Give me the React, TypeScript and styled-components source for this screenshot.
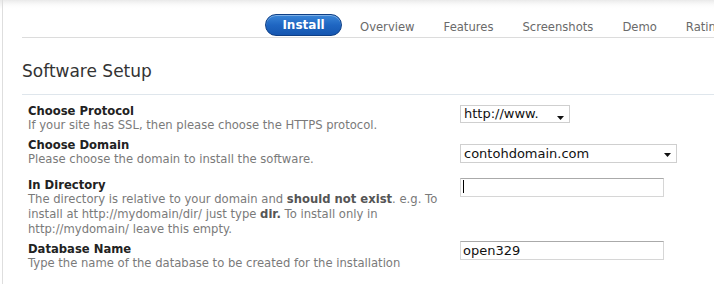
import React from "react";
import styled, { createGlobalStyle } from "styled-components";

const GlobalStyle = createGlobalStyle`
  html, body {
    margin: 0;
    padding: 0;
    background: #fff;
  }
  body {
    font-family: "DejaVu Sans", Verdana, sans-serif;
  }
`;

const Page = styled.div`
  width: 714px;
  height: 284px;
  box-sizing: border-box;
  overflow: hidden;
  background: linear-gradient(#e9e9e9 0px, #fff 9px);
  padding-left: 2px;
`;

const Panel = styled.div`
  height: 100%;
  border-left: 1px solid #dedede;
  background: linear-gradient(rgba(255, 255, 255, 0) 0px, #fff 9px);
  padding-left: 19px;
  padding-top: 14px;
  box-sizing: border-box;
`;

const TabBar = styled.div`
  display: flex;
  align-items: center;
  padding-left: 243px;
  border-bottom: 1px solid #dcdcdc;
  height: 23px;
  white-space: nowrap;
  overflow: hidden;
`;

const ActiveTab = styled.div`
  flex-shrink: 0;
  height: 22px;
  width: 77px;
  box-sizing: border-box;
  border: 1px solid #0e3f86;
  border-radius: 11px;
  background: linear-gradient(#3a86d8 0%, #1f66c2 50%, #1556b0 100%);
  box-shadow: inset 0 1px 0 rgba(255, 255, 255, 0.35);
  color: #fff;
  font-size: 12px;
  font-weight: bold;
  display: flex;
  align-items: center;
  justify-content: center;
  margin-right: 3.5px;
  margin-top: -1px;
`;

const Tab = styled.div`
  flex-shrink: 0;
  padding: 0 14.5px;
  font-size: 11.6px;
  color: #6a6a6a;
  margin-top: 2px;
`;

const Heading = styled.h1`
  margin: 0;
  font-size: 17px;
  font-weight: normal;
  color: #333;
  padding: 23px 0 12px;
  border-bottom: 1px solid #dfe6ec;
  line-height: 21px;
`;

const Form = styled.div`
  padding-left: 6px;
  padding-top: 9px;
`;

const Row = styled.div<{ $space: number }>`
  display: grid;
  grid-template-columns: 432px 1fr;
  margin-top: ${(p) => p.$space}px;
`;

const Label = styled.div`
  font-size: 11.6px;
  font-weight: bold;
  color: #222;
  line-height: 14px;
`;

const Desc = styled.div`
  font-size: 11.6px;
  color: #7a7a7a;
  line-height: 15px;
  padding-right: 12px;

  b {
    color: #555;
  }
`;

const Field = styled.div<{ $top: number; $width: number }>`
  position: relative;
  margin-top: ${(p) => p.$top}px;
  width: ${(p) => p.$width}px;
`;

const Select = styled.select<{ $h: number }>`
  appearance: none;
  width: 100%;
  height: ${(p) => p.$h}px;
  box-sizing: border-box;
  border: 1px solid #cfcfcf;
  border-radius: 0;
  background: #fff;
  font-family: "DejaVu Sans", Verdana, sans-serif;
  font-size: 13px;
  color: #111;
  padding: 0 0 0 3px;
  margin: 0;
  outline: none;
`;

const Arrow = styled.svg`
  position: absolute;
  right: 6px;
  top: 50%;
  margin-top: -2px;
  pointer-events: none;
`;

const Input = styled.input`
  width: 100%;
  height: 19px;
  box-sizing: border-box;
  border: 1px solid #d6d6d6;
  border-top-color: #aaa;
  border-radius: 0;
  background: #fff;
  font-family: "DejaVu Sans", Verdana, sans-serif;
  font-size: 13px;
  color: #111;
  padding: 0 0 0 2px;
  margin: 0;
  outline: none;
`;

const Caret = styled.span`
  position: absolute;
  left: 3px;
  top: 3px;
  width: 1px;
  height: 13px;
  background: #000;
`;

const DownArrow = () => (
  <Arrow width="7" height="4" viewBox="0 0 7 4">
    <path d="M0 0h7L3.5 4z" fill="#111" />
  </Arrow>
);

export default function App() {
  return (
    <>
      <GlobalStyle />
      <Page>
        <Panel>
          <TabBar>
            <ActiveTab>Install</ActiveTab>
            <Tab>Overview</Tab>
            <Tab>Features</Tab>
            <Tab>Screenshots</Tab>
            <Tab>Demo</Tab>
            <Tab>Ratings</Tab>
          </TabBar>
          <Heading>Software Setup</Heading>
          <Form>
            <Row $space={0}>
              <div>
                <Label>Choose Protocol</Label>
                <Desc>If your site has SSL, then please choose the HTTPS protocol.</Desc>
              </div>
              <Field $top={-1} $width={110}>
                <Select $h={18} defaultValue="http://www.">
                  <option>http://www.</option>
                  <option>http://</option>
                  <option>https://</option>
                  <option>https://www.</option>
                </Select>
                <DownArrow />
              </Field>
            </Row>
            <Row $space={5}>
              <div>
                <Label>Choose Domain</Label>
                <Desc>Please choose the domain to install the software.</Desc>
              </div>
              <Field $top={5} $width={217}>
                <Select $h={19} defaultValue="contohdomain.com">
                  <option>contohdomain.com</option>
                </Select>
                <DownArrow />
              </Field>
            </Row>
            <Row $space={11}>
              <div>
                <Label>In Directory</Label>
                <Desc>
                  The directory is relative to your domain and <b>should not exist</b>. e.g. To
                  install at http://mydomain/dir/ just type <b>dir.</b> To install only in
                  http://mydomain/ leave this empty.
                </Desc>
              </div>
              <Field $top={-1} $width={204}>
                <Input type="text" defaultValue="" />
                <Caret />
              </Field>
            </Row>
            <Row $space={5}>
              <div>
                <Label>Database Name</Label>
                <Desc>Type the name of the database to be created for the installation</Desc>
              </div>
              <Field $top={-2} $width={204}>
                <Input type="text" defaultValue="open329" />
              </Field>
            </Row>
          </Form>
        </Panel>
      </Page>
    </>
  );
}
